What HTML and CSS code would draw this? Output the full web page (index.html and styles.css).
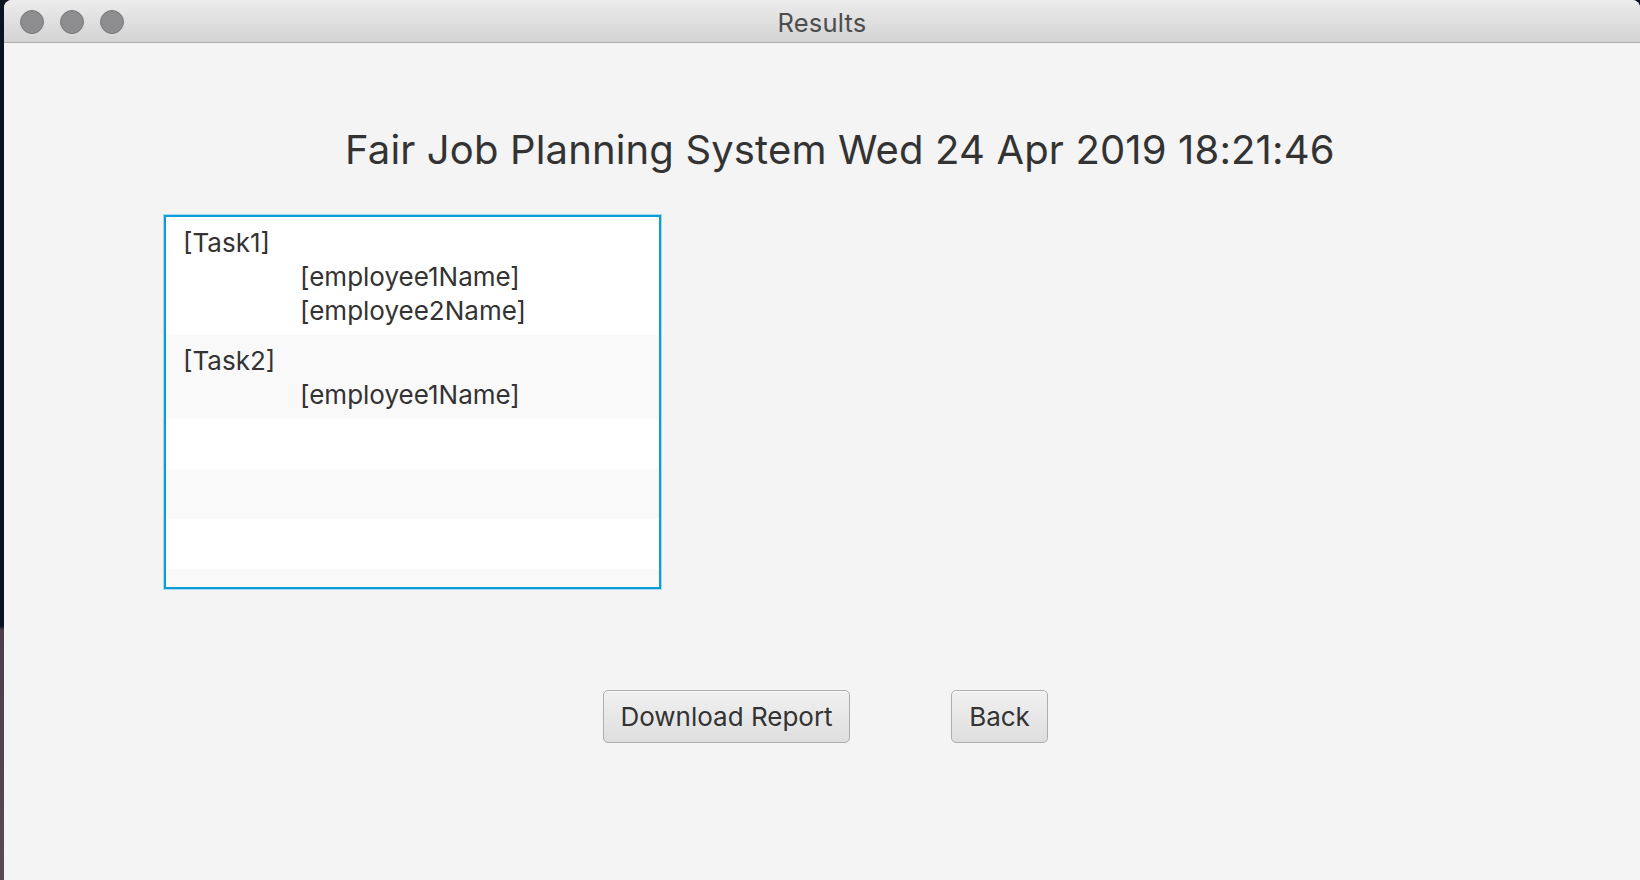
FILE: index.html
```html
<!DOCTYPE html>
<html>
<head>
<meta charset="utf-8">
<title>Results</title>
<link rel="stylesheet" href="styles.css">
</head>
<body>
<div class="desktop">
  <div class="window">
    <div class="titlebar">
      <div class="lights">
        <span class="light"></span>
        <span class="light"></span>
        <span class="light"></span>
      </div>
      <div class="wtitle">Results</div>
    </div>
    <div class="content">
      <h1 class="heading">Fair Job Planning System Wed 24 Apr 2019 18:21:46</h1>
      <div class="listbox">
        <div class="row">
          <div class="task">[Task1]</div>
          <div class="emp">[employee1Name]</div>
          <div class="emp">[employee2Name]</div>
        </div>
        <div class="row odd">
          <div class="task">[Task2]</div>
          <div class="emp">[employee1Name]</div>
        </div>
        <div class="row empty"></div>
        <div class="row empty odd"></div>
        <div class="row empty"></div>
        <div class="row empty odd"></div>
      </div>
      <div class="buttons">
        <button class="btn btn-download">Download Report</button>
        <button class="btn btn-back">Back</button>
      </div>
    </div>
  </div>
</div>
</body>
</html>
```

FILE: styles.css
```css
html, body {
  margin: 0;
  padding: 0;
  width: 1640px;
  height: 880px;
  overflow: hidden;
}

body {
  font-family: Inter, "Liberation Sans", sans-serif;
  color: #333333;
}

.desktop {
  width: 1640px;
  height: 880px;
  display: flex;
  background: linear-gradient(to bottom, #0b1222 0px, #0b1222 626px, #4b4049 630px, #564b53 880px);
}

.window {
  margin-left: 4px;
  flex: 1;
  display: flex;
  flex-direction: column;
  background: #f4f4f4;
  border-radius: 8px 8px 0 0;
  overflow: hidden;
}

.titlebar {
  height: 42px;
  flex: none;
  display: flex;
  align-items: center;
  background: linear-gradient(to bottom, #ececec, #d3d3d3);
  border-bottom: 1px solid #ababab;
  position: relative;
}

.lights {
  display: flex;
  gap: 16px;
  padding-left: 16px;
  padding-top: 2px;
}

.light {
  width: 22px;
  height: 22px;
  border-radius: 50%;
  background: #8d8c8e;
  border: 1px solid #7a797b;
}

.wtitle {
  position: absolute;
  left: 0;
  right: 0;
  top: 0;
  height: 42px;
  line-height: 46px;
  text-align: center;
  font-size: 25.5px;
  letter-spacing: 0.2px;
  color: #4d4d4d;
  pointer-events: none;
}

.content {
  flex: 1;
  display: flex;
  flex-direction: column;
}

.heading {
  margin: 83px 0 0 0;
  padding-left: 341px;
  font-size: 40px;
  letter-spacing: 0.15px;
  font-weight: 400;
  line-height: 48px;
  color: #333333;
  white-space: nowrap;
}

.listbox {
  margin: 41px 0 0 160px;
  width: 493px;
  height: 370px;
  border: 2px solid #0a9dd6;
  box-shadow: 0 0 0 1px #a8d8ef;
  background: #ffffff;
  overflow: hidden;
}

.row {
  padding: 9px 0 7px 17px;
  background: #ffffff;
  font-size: 26px;
  letter-spacing: 0;
  line-height: 34px;
  color: #333333;
}

.row.odd {
  background: #f9f9f9;
}

.row.empty {
  height: 34px;
}

.emp {
  padding-left: 117px;
}

.buttons {
  display: flex;
  margin: 101px 0 0 599px;
  gap: 101px;
}

.btn {
  height: 53px;
  font-family: Inter, "Liberation Sans", sans-serif;
  font-size: 26px;
  letter-spacing: 0;
  color: #333333;
  background: linear-gradient(to bottom, #f1f1f1, #dedede);
  border: 1px solid #adadad;
  border-radius: 5px;
  box-shadow: inset 0 1px 0 #fbfbfb;
  padding: 0;
}

.btn-download {
  width: 247px;
}

.btn-back {
  width: 97px;
}
```
